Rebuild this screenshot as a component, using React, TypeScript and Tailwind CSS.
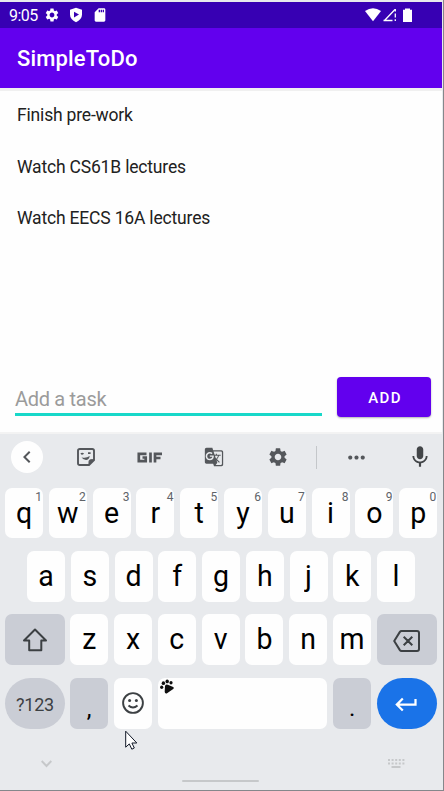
import type { ReactNode } from 'react';
import {
  MdSettings,
  MdSdCard,
  MdGTranslate,
  MdMic,
  MdMoreHoriz,
  MdChevronLeft,
  MdKeyboardReturn,
} from 'react-icons/md';

const tasks = ['Finish pre-work', 'Watch CS61B lectures', 'Watch EECS 16A lectures'];

function StatusBar() {
  return (
    <div className="flex h-[26px] items-center bg-[#3700b3] pl-[9px] pr-[28px] text-white">
      <span className="w-[35px] pt-px text-[16px] leading-[26px] tracking-[-0.500px]">9:05</span>
      <MdSettings className="size-4" />
      <svg className="ml-2 size-4" viewBox="0 0 16 16">
        <path d="M8 .8 14 2.800v5c0 3.300-2.300 5.700-6 7.400-3.700-1.700-6-4.100-6-7.400v-5z" fill="#fff" />
        <path d="M6 4.700v5.800l5-2.900z" fill="#3700b3" />
      </svg>
      <MdSdCard className="ml-2 size-[16px]" />
      <span className="grow" />
      <svg className="h-4 w-[50px]" viewBox="0 0 50 16">
        <path d="M1 4Q9 -1.500 17 4L9 14.200z" fill="#fff" />
        <path d="M20.500 13.500 31 2.500M19.500 13.500h9" stroke="#fff" strokeWidth="1.300" fill="none" />
        <path d="M31.300 2v2.500M31.300 6.500v4M31.300 12.200v1.800" stroke="#fff" strokeWidth="1.300" />
        <path d="M41 1.500h5v1.200h2V15h-9V2.700h2z" fill="#fff" />
      </svg>
    </div>
  );
}

function Key({ label, hint, height = 'h-[51px]' }: { label: string; hint?: string; height?: string }) {
  return (
    <div className={`relative flex w-[38px] shrink-0 justify-center rounded-[7px] bg-[#fefefe] ${height}`}>
      <span className="scale-y-[1.04] pt-px text-[28.500px] leading-[50px] text-black">{label}</span>
      {hint && <span className="absolute right-[1px] top-[3px] text-[12px] leading-[12px] text-[#5f6368]">{hint}</span>}
    </div>
  );
}

function GrayKey({ children, className }: { children: ReactNode; className: string }) {
  return <div className={`flex shrink-0 items-center justify-center bg-[#cacdd5] text-[#3c4043] ${className}`}>{children}</div>;
}

function Toolbar() {
  return (
    <div className="flex h-[46px] items-center pl-[11px] text-[#54575b]">
      <div className="flex size-8 items-center justify-center rounded-full bg-[#fefefe]">
        <MdChevronLeft className="size-[24px]" />
      </div>
      <svg className="ml-[34px] size-[18px]" viewBox="0 0 18 18" fill="none" stroke="currentColor" strokeWidth="1.900">
        <path d="M2.800 1h12.400q1.800 0 1.800 1.800V12l-5 5H2.800Q1 17 1 15.200V2.800Q1 1 2.800 1z" />
        <path d="M17 11.700h-3.200q-1.800 0-1.800 1.800V17z" fill="currentColor" strokeWidth="1" />
        <path d="M4 6.200q1.200-1.300 2.400 0M11 5.200h2.600" strokeWidth="1.700" />
        <path d="M4.500 9.200q4 1.500 8.300-1.200-.8 4-3.800 4-3 0-4.500-2.800z" fill="currentColor" stroke="none" />
      </svg>
      <svg className="ml-[42px] h-[11px] w-[25px]" viewBox="0 0 25 11" fill="none" stroke="currentColor" strokeWidth="2.700">
        <path d="M9.500 1.800H1.800v7.400h6.900V5.500H5.500M13.500.5v10M18 10.500V1.800h7M18 6h5.500" />
      </svg>
      <MdGTranslate className="ml-[42px] size-5" />
      <MdSettings className="ml-[43px] size-[22px]" />
      <span className="ml-[27px] h-[23px] w-px bg-[#c4c7ca]" />
      <MdMoreHoriz className="ml-[27px] size-[25px]" />
      <MdMic className="ml-[38px] size-[26px] text-[#424548]" />
    </div>
  );
}

function Keyboard() {
  return (
    <div className="flex h-[356px] flex-col bg-[#e8eaed]">
      <Toolbar />
      <div className="mt-[8px] flex gap-[5.800px] pl-[5px]">
        {'qwertyuiop'.split('').map((k, i) => (
          <Key key={k} label={k} hint={String((i + 1) % 10)} height="h-[50px]" />
        ))}
      </div>
      <div className="mt-[13px] flex gap-[5.750px] pl-[27px]">
        {'asdfghjkl'.split('').map((k) => (
          <Key key={k} label={k} />
        ))}
      </div>
      <div className="mt-[12px] flex gap-[5.800px] pl-[5px]">
        <GrayKey className="-mr-[0.600px] h-[51px] w-[60px] rounded-[7px]">
          <svg className="size-[26px]" viewBox="0 0 26 26" fill="none" stroke="currentColor" strokeWidth="2" strokeLinejoin="round">
            <path d="M13 2.500 24 13.500h-4.700v9.700H7.200v-9.700H2z" />
          </svg>
        </GrayKey>
        {'zxcvbnm'.split('').map((k) => (
          <Key key={k} label={k} />
        ))}
        <GrayKey className="h-[51px] w-[60px] rounded-[7px]">
          <svg className="mt-[2px] h-[22px] w-[27px]" viewBox="0 0 27 22" fill="none" stroke="currentColor" strokeWidth="2" strokeLinejoin="round">
            <path d="M8.500 1H24q2 0 2 2v16q0 2-2 2H8.500q-1 0-1.600-.9L1.200 11l5.700-9.100Q7.500 1 8.500 1zM10.700 6.700l8.600 8.600M19.300 6.700l-8.600 8.600" />
          </svg>
        </GrayKey>
      </div>
      <div className="mt-[13px] flex gap-[5.800px] pl-[5px]">
        <GrayKey className="-mr-[0.600px] h-[51px] w-[60px] rounded-[26px] pt-[2px] text-[18px]">
          <span className="scale-y-[1.060] tracking-[-0.200px]">?123</span>
        </GrayKey>
        <GrayKey className="h-[51px] w-[38px] rounded-[7px]">
          <span className="mt-[10px] text-[24px] leading-[26px] text-black">,</span>
        </GrayKey>
        <div className="flex h-[51px] w-[38px] shrink-0 items-center justify-center rounded-[7px] bg-[#fefefe]">
          <svg className="mb-px size-[22px]" viewBox="0 0 22 22" fill="none" stroke="#3c4043" strokeWidth="1.900">
            <circle cx="11" cy="11" r="9.900" />
            <path d="M6.500 13.500q4.500 4.200 9 0" />
            <circle cx="7.600" cy="8.500" r="1.500" fill="#3c4043" stroke="none" />
            <circle cx="14.400" cy="8.500" r="1.500" fill="#3c4043" stroke="none" />
          </svg>
        </div>
        <div className="h-[51px] w-[169.500px] shrink-0 rounded-[7px] bg-[#fefefe] pl-[2px] pt-[1px]">
          <svg className="size-[15px]" viewBox="0 0 15 15" fill="#101010">
            <path d="M5 7q.5-2.300 2.800-1.200L13.200 8q1.400 1 0 2.100l-6.500 4.300q-2 .4-2-1.600z" />
            <ellipse cx="1.700" cy="8.200" rx="1.600" ry="1.700" />
            <ellipse cx="3.400" cy="4.200" rx="1.700" ry="1.900" />
            <ellipse cx="7.200" cy="2.400" rx="1.700" ry="1.900" />
            <ellipse cx="11" cy="3.800" rx="1.600" ry="1.700" />
          </svg>
        </div>
        <GrayKey className="h-[51px] w-[38px] rounded-[7px]">
          <span className="mt-[8px] text-[24px] leading-[26px] text-black">.</span>
        </GrayKey>
        <div className="flex h-[51px] w-[60px] shrink-0 items-center justify-center rounded-[26px] bg-[#1a73e8] text-white">
          <MdKeyboardReturn className="mt-px size-[27px]" />
        </div>
      </div>
      <div className="flex grow items-start justify-between pl-[41px] pr-[37px] pt-[29px]">
        <svg className="mt-[2px] h-[8px] w-[11px]" viewBox="0 0 11 8" fill="none" stroke="#c6c8ca" strokeWidth="2">
          <path d="M.7 1l4.800 5L10.300 1" />
        </svg>
        <div className="ml-[2px] mt-[22px] h-[2px] w-[77px] rounded bg-[#c6c8ca]" />
        <svg className="h-[10px] w-[18px]" viewBox="0 0 18 10" stroke="#c6c8ca" strokeWidth="2">
          <path d="M1 2h17M1 5.500h17" strokeDasharray="2 1.600" />
          <path d="M4.500 9h9" />
        </svg>
      </div>
    </div>
  );
}

export default function App() {
  return (
    <div className="relative flex h-[791px] w-[444px] flex-col overflow-hidden border-b border-r border-[#85878b] bg-[#e8eaed] pr-px pt-[2px] font-['Roboto',sans-serif]">
      <StatusBar />
      <header className="h-[60px] bg-[#6200ee] pl-[17px] text-[22px] font-medium leading-[62px] tracking-[0.150px] text-white">
        SimpleToDo
      </header>
      <main className="flex h-[346px] flex-col border-b-2 border-t-[3px] border-b-[#f3f3f3] border-t-[#f0f0f0] bg-[#fefefe] text-[#212121]">
        <ul className="-mt-[3px]">
          {tasks.map((t) => (
            <li key={t} className="h-[51.700px] pl-[17px] text-[17.500px] leading-[54.500px] tracking-[-0.180px]">
              {t}
            </li>
          ))}
        </ul>
        <div className="mt-auto flex items-end pb-[15px] pl-[15px]">
          <div className="mb-px h-[36px] w-[307px] border-b-[3px] border-[#18d8c9] text-[20px] leading-[39px] tracking-[-0.300px] text-[#9b9b9b]">
            Add a task
          </div>
          <button className="ml-[15px] h-[40px] w-[94px] rounded-[4px] bg-[#6200ee] pl-[2px] pt-[2px] text-[15px] font-medium tracking-[1.400px] text-white shadow-[0_1px_2px_rgba(0,0,0,0.3)]">
            ADD
          </button>
        </div>
      </main>
      <Keyboard />
      <svg className="absolute left-[125px] top-[730px] h-[20px] w-[13px]" viewBox="0 0 13 20">
        <path d="M.7 1.200v16l3.600-3.300 2.500 5.300 2.500-1.200-2.400-5h4.900z" fill="#fff" stroke="#111827" strokeWidth="1" />
      </svg>
    </div>
  );
}
